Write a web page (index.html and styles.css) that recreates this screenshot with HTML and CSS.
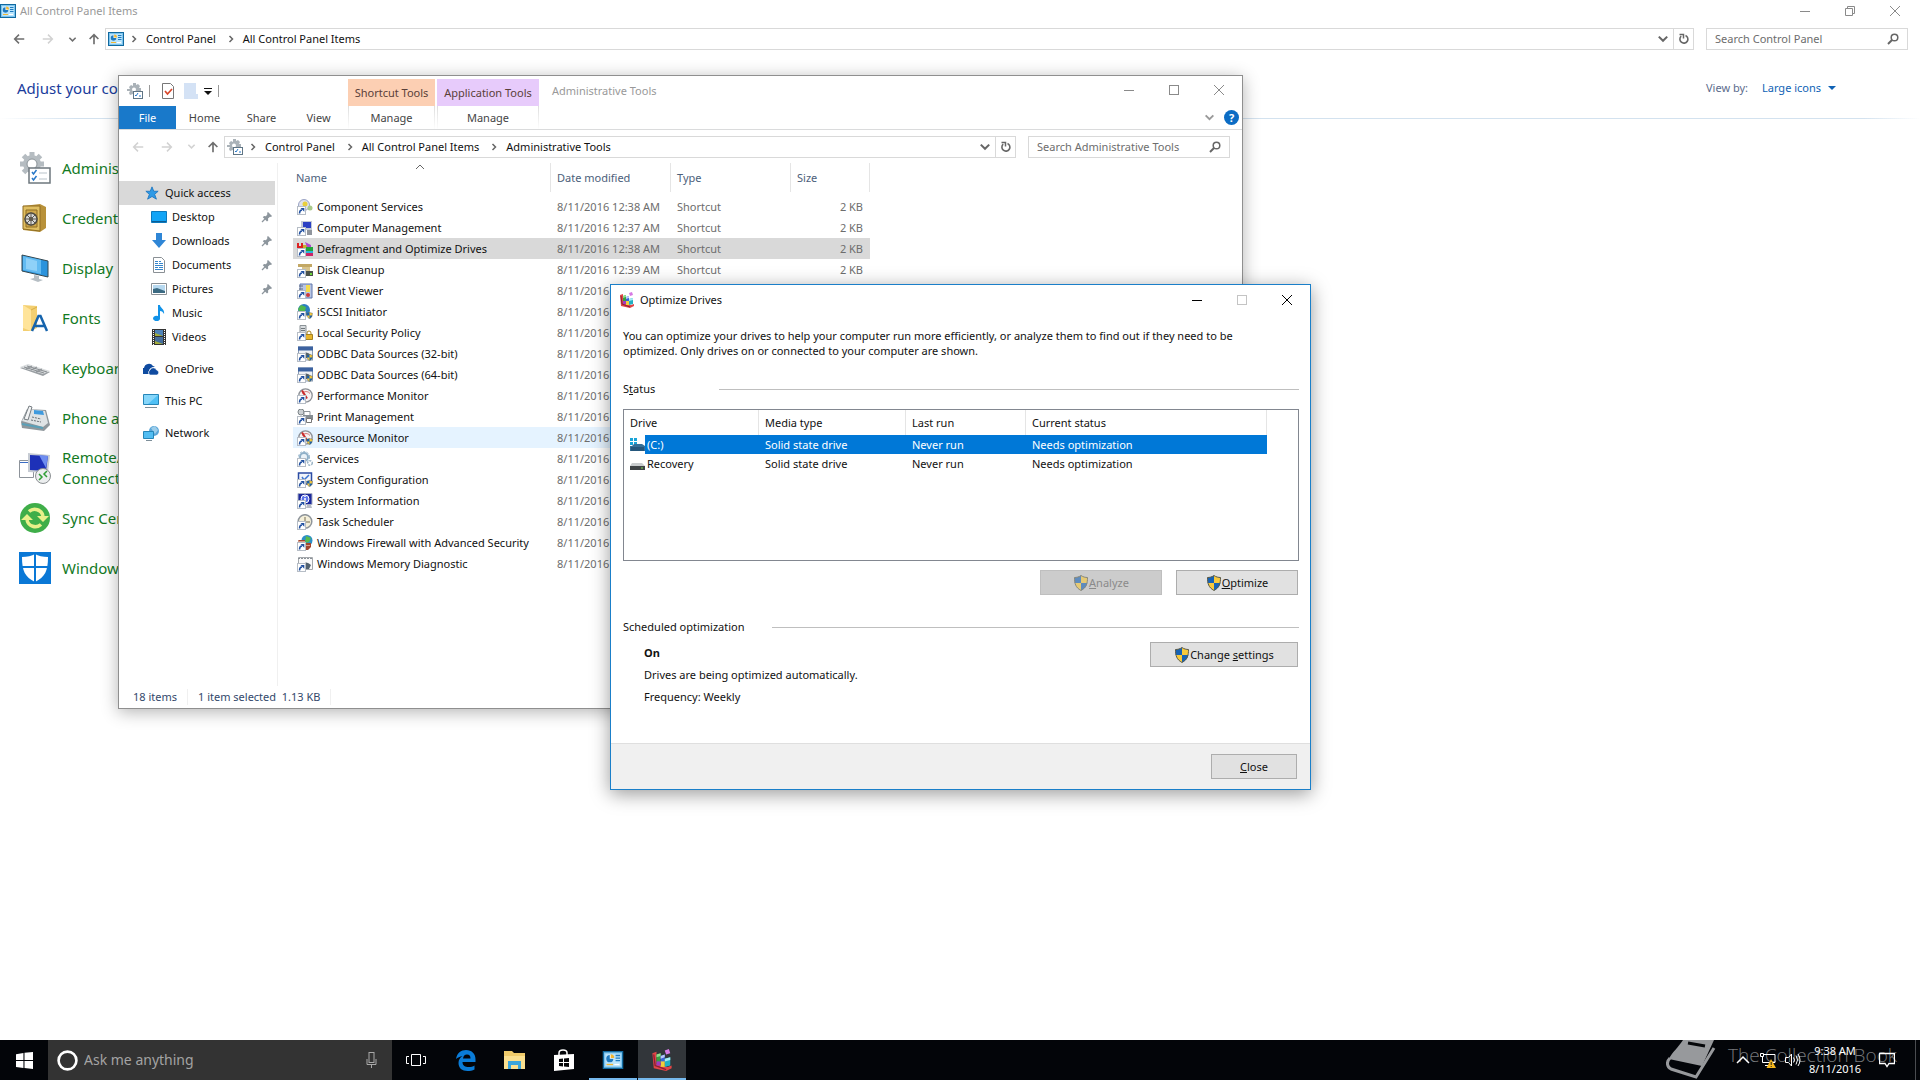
FILE: index.html
```
<!DOCTYPE html>
<html lang="en">
<head>
    <meta charset="UTF-8">
    <meta name="viewport" content="width=device-width, initial-scale=1.0">
    <title>All Control Panel Items</title>
    <link rel="stylesheet" href="styles.css">
</head>
<body>
    <!-- shared icons -->
    <svg class="sprite" aria-hidden="true">
        <symbol id="i-cp" viewBox="0 0 16 14">
            <rect x=".5" y=".5" width="15" height="13" fill="#7cc4ef" stroke="#11699f"/>
            <rect x="2" y="2" width="12" height="10" fill="#b9e4fb"/>
            <circle cx="5.500" cy="6" r="2.800" fill="#fff"/>
            <path d="M5.500 3.200A2.800 2.800 0 1 0 8.300 6H5.500z" fill="#1e7ac0"/>
            <path d="M6.200 2.600V5.400H9A2.800 2.800 0 0 0 6.200 2.600z" fill="#f2b632"/>
            <path d="M10 3.500h3.500M10 5.500h3.500M10 7.500h3.500" stroke="#1e7ac0"/>
            <path d="M3 10.500h5" stroke="#f2b632"/><path d="M9 10.500h4" stroke="#fff"/>
        </symbol>
        <symbol id="i-admin" viewBox="0 0 32 32">
            <g fill="#b5bcc1">
                <circle cx="13" cy="12" r="9"/>
                <path d="M10.500 0h5v24h-5zM1 9.500h24v5H1z"/>
                <path d="M10.500 0h5v24h-5zM1 9.500h24v5H1z" transform="rotate(45 13 12)"/>
            </g>
            <circle cx="13" cy="12" r="5" fill="#fff" stroke="#8c9499"/>
            <rect x="10" y="16" width="21" height="15" fill="#fff" stroke="#6d777d" stroke-width="1.500"/>
            <path d="M13 20l1.500 2 3-4M13 26l1.500 2 3-4" fill="none" stroke="#2878c8" stroke-width="1.500"/>
            <path d="M20 21h8M20 27h8" stroke="#b9c3ca"/>
        </symbol>
        <symbol id="i-back" viewBox="0 0 16 16"><path d="M14 8H3M8 3L3 8l5 5" fill="none" stroke="currentColor" stroke-width="1.700"/></symbol>
        <symbol id="i-fwd" viewBox="0 0 16 16"><path d="M2 8h11M8 3l5 5-5 5" fill="none" stroke="currentColor" stroke-width="1.700"/></symbol>
        <symbol id="i-up" viewBox="0 0 16 16"><path d="M8 14V3M3 8l5-5 5 5" fill="none" stroke="currentColor" stroke-width="1.900"/></symbol>
        <symbol id="i-down" viewBox="0 0 10 10"><path d="M1.500 3L5 6.500 8.500 3" fill="none" stroke="currentColor" stroke-width="1.700"/></symbol>
        <symbol id="i-next" viewBox="0 0 10 10"><path d="M3.500 2L6.500 5l-3 3" fill="none" stroke="currentColor" stroke-width="1.500"/></symbol>
        <symbol id="i-refresh" viewBox="0 0 12 12"><path d="M3.200 3.200A4 4 0 1 0 7.500 2.500" fill="none" stroke="currentColor" stroke-width="1.600"/><path d="M1.500 1.500H5.500V5.500" fill="none" stroke="currentColor" stroke-width="1.500"/></symbol>
        <symbol id="i-find" viewBox="0 0 12 12"><circle cx="7.500" cy="4.500" r="3.300" fill="none" stroke="currentColor" stroke-width="1.500"/><path d="M5 7L1 11" stroke="currentColor" stroke-width="1.900"/></symbol>
        <symbol id="i-min" viewBox="0 0 12 12"><path d="M1 6.500h10" stroke="currentColor"/></symbol>
        <symbol id="i-max" viewBox="0 0 12 12"><rect x="1.500" y="1.500" width="9" height="9" fill="none" stroke="currentColor"/></symbol>
        <symbol id="i-restore" viewBox="0 0 12 12"><path d="M1.500 3.500h7v7h-7zM3.500 3.500v-2h7v7h-2" fill="none" stroke="currentColor"/></symbol>
        <symbol id="i-close" viewBox="0 0 12 12"><path d="M1 1l10 10M11 1L1 11" stroke="currentColor"/></symbol>
        <symbol id="i-pin" viewBox="0 0 12 12"><path d="M7 1l4 4-1 1-1-.3L7 7.500l.2 2L6 10.500 1.800 6.300 3 5l2 .2L6.500 3 6 2z" fill="#8d969d"/><path d="M4 8L1 11" stroke="#8d969d" stroke-width="1.300"/></symbol>
        <symbol id="i-shield" viewBox="0 0 16 16">
            <path d="M8 .5C6 2 3.500 2.500 1.500 2.500c0 6 1 10 6.500 13 5.500-3 6.500-7 6.500-13C12.500 2.500 10 2 8 .5z" fill="#f8ca3c"/>
            <path d="M8 .5V8H1.700C1.500 6.500 1.500 4.500 1.500 2.500 3.500 2.500 6 2 8 .5zM8 8h6.300C13.800 11 12 13.500 8 15.500z" fill="#1763b5"/>
            <path d="M8 .5C6 2 3.500 2.500 1.500 2.500c0 6 1 10 6.500 13 5.500-3 6.500-7 6.500-13C12.500 2.500 10 2 8 .5z" fill="none" stroke="#5a5a4a"/>
        </symbol>
        <symbol id="i-link" viewBox="0 0 16 16">
            <rect x=".5" y="7.500" width="8" height="8" fill="#fff" stroke="#b6bdc6"/>
            <path d="M2.500 14.500c0-2.500 1-3.500 2.500-3.500" fill="none" stroke="#1f4fa0" stroke-width="1.500"/><path d="M3.500 9h3.800v3.800z" fill="#1f4fa0"/>
        </symbol>
        <symbol id="i-defrag" viewBox="0 0 16 16">
            <path d="M1 3l3-1v9l8 2 3-1v2l-4 2-9-2z" fill="#e04646"/>
            <path d="M2 4l1 8 8 3" fill="none" stroke="#8e1f35"/>
            <path d="M4 4l3-1v7H4z" fill="#36a043"/><path d="M4 4l3-1v2l-3 1z" fill="#8fe08c"/>
            <path d="M7 5l3-1v6H7z" fill="#3a62d8"/><path d="M7 5l3-1v2L7 7z" fill="#b8c8fa"/>
            <path d="M10 7l4-1v6l-4 1z" fill="#22b0c4"/><path d="M10 7l4-1v2l-4 1z" fill="#a6ecf2"/>
            <path d="M7 9h3v4H7z" fill="#f0cf3b"/><path d="M4 9h3v3H4z" fill="#a03ac0"/>
            <path d="M10 1l3-1 1 3-3 1z" fill="#d67ae4"/>
        </symbol>
        <symbol id="i-gauge" viewBox="0 0 16 16"><circle cx="8.500" cy="7.500" r="6.700" fill="#f6f3f3" stroke="#8b8f95" stroke-width="1.300"/><path d="M5 5.500a5 5 0 0 1 8 0" fill="none" stroke="#d67a7a"/><path d="M5 2.500l5 8" stroke="#c92a2a" stroke-width="2"/></symbol>
        <symbol id="i-odbc" viewBox="0 0 16 16"><rect x="1.500" y="1" width="14" height="13" fill="#eef1f5" stroke="#8a9bb5"/><path d="M1 .5h15v4H1z" fill="#3c62a0"/><path d="M5 9q4-5 9 0l-2 3H7z" fill="#56636e"/></symbol>
        <symbol id="i-miniadmin" viewBox="0 0 16 16"><path d="M6 0h3v2l2-1 2 2-1 2h2v3h-4v7H6v-4l-3 1-1-2 1-2H0V6h3L2 4l2-2 2 1z" fill="#aab2b8"/><circle cx="7" cy="6.500" r="2" fill="#fff"/><rect x="6.500" y="8.500" width="9" height="7" fill="#fff" stroke="#5f7585"/><path d="M8 12l1 1 2-3M12 13h2" fill="none" stroke="#2878c8"/></symbol>
    </svg>

    <main class="desktop">
        <section class="cpanel">
            <header class="titlebar">
                <svg class="icon"><use href="#i-cp"/></svg>
                <h1 class="caption">All Control Panel Items</h1>
                <div class="controls">
                    <button aria-label="Minimize"><svg><use href="#i-min"/></svg></button>
                    <button aria-label="Restore"><svg><use href="#i-restore"/></svg></button>
                    <button aria-label="Close"><svg><use href="#i-close"/></svg></button>
                </div>
            </header>
            <nav class="navbar">
                <div class="arrows">
                    <button aria-label="Back"><svg><use href="#i-back"/></svg></button>
                    <button class="off" aria-label="Forward"><svg><use href="#i-fwd"/></svg></button>
                    <button class="small" aria-label="Recent"><svg><use href="#i-down"/></svg></button>
                    <button class="up" aria-label="Up"><svg><use href="#i-up"/></svg></button>
                </div>
                <div class="address">
                    <svg class="icon"><use href="#i-cp"/></svg>
                    <svg class="sep"><use href="#i-next"/></svg><a href="#">Control Panel</a>
                    <svg class="sep"><use href="#i-next"/></svg><a href="#">All Control Panel Items</a>
                    <button class="drop" aria-label="Previous locations"><svg><use href="#i-down"/></svg></button>
                    <button class="refresh" aria-label="Refresh"><svg><use href="#i-refresh"/></svg></button>
                </div>
                <div class="search">
                    <input type="text" placeholder="Search Control Panel" aria-label="Search Control Panel">
                    <svg><use href="#i-find"/></svg>
                </div>
            </nav>
            <div class="cp-head">
                <h2>Adjust your computer's settings</h2>
                <label for="viewby">View by:</label>
                <span class="viewby">
                    <select id="viewby"><option>Large icons</option></select>
                    <svg viewBox="0 0 8 5"><path d="M0 0h8L4 4z" fill="#0f62b5"/></svg>
                </span>
            </div>
            <ul class="cp-items">
                <li><svg viewBox="0 0 32 32"><use href="#i-admin"/></svg><a href="#">Administrative Tools</a></li>
                <li><svg viewBox="0 0 32 32"><path d="M4 4l17-2 6 3v21l-6 4-17-2z" fill="#b8913a"/><path d="M4 4h17v25l-17-2z" fill="#e0bf62" stroke="#8f6d22"/><path d="M7 8h11v17H7z" fill="#cfa84b" stroke="#8f6d22"/><circle cx="12" cy="17" r="6" fill="#d7d9da" stroke="#4e4a40" stroke-width="1.500"/><circle cx="12" cy="17" r="2" fill="#4e4a40"/><path d="M12 10v14M5 17h14M7 12l10 10M17 12L7 22" stroke="#5e594c"/></svg><a href="#">Credential Manager</a></li>
                <li><svg viewBox="0 0 32 32"><path d="M3 3l26 6v16L3 19z" fill="#2b93dc" stroke="#35474f"/><path d="M4 4l18 4v14L4 18z" fill="#62bbf2"/><path d="M7 6l11 3v10L7 17z" fill="#8fd1f8"/><path d="M15 23l5 1v3l4 1-5 2-8-3 4-1z" fill="#b6bec4"/></svg><a href="#">Display</a></li>
                <li><svg viewBox="0 0 32 32"><path d="M4 3l14 1v22l-6 3H4z" fill="#f3cf71"/><path d="M4 3l8 5v21l-8-3z" fill="#ffe49a"/><path d="M12 8l6-3" stroke="#d9ae48"/><path d="M13 29l6.500-15h2L28 29M16 24h9" fill="none" stroke="#1664ad" stroke-width="2.500"/></svg><a href="#">Fonts</a></li>
                <li><svg viewBox="0 0 32 32"><path d="M1 16l8-3 22 7-7 4z" fill="#9a9fa3"/><path d="M1 15l8-3 22 7-7 3z" fill="#d9dcde"/><path d="M5 15l20 6M8 14l20 6M7 17l6-3M12 18l6-3M17 20l6-3" stroke="#888d91"/></svg><a href="#">Keyboard</a></li>
                <li><svg viewBox="0 0 32 32"><path d="M2 20l6-13 19 1 4 15-6 6-22-3z" fill="#8f979c"/><path d="M3 19l6-12 17 2 3 12-5 4z" fill="#dfe3e5"/><path d="M15 8l9 1 1 4-10-1z" fill="#3f9ade"/><path d="M5 17l5-13 3 1-4 13z" fill="#f3f4f5" stroke="#767d82"/><path d="M13 15l9 2M12 18l10 2" stroke="#6a7278" stroke-dasharray="2 1"/><path d="M3 22l21 4" stroke="#5aa0b8" stroke-width="2"/></svg><a href="#">Phone and Modem</a></li>
                <li><svg viewBox="0 0 32 32"><path d="M.5 8.500h14v17H.5z" fill="#fff" stroke="#8d939a"/><path d="M1 10.500h8" stroke="#3a6cc4"/><path d="M9 1l22 2-2 18-20-1z" fill="#c6cbd3"/><path d="M11 3l18 1-2 15-16-1z" fill="#1d31b8"/><path d="M20 3l9 1-2 12z" fill="#6d8cf0"/><circle cx="24" cy="24" r="7.500" fill="#eceeef" stroke="#8b8f92"/><path d="M20 22l3 3-3 3M28 19l-3 3 3 3" fill="none" stroke="#2f9e36" stroke-width="1.500"/></svg><a href="#">RemoteApp and Desktop Connections</a></li>
                <li><svg viewBox="0 0 32 32"><circle cx="16" cy="16" r="15" fill="#3fae49"/><path d="M10 9.500A8.500 8.500 0 0 1 24 14M22 22.500A8.500 8.500 0 0 1 8 18" fill="none" stroke="#e9f08a" stroke-width="3.500"/><path d="M18 14h12l-6 6zM14 18H2l6-6z" fill="#e9f08a"/></svg><a href="#">Sync Center</a></li>
                <li><svg viewBox="0 0 32 32"><path d="M0 0h32v32H0z" fill="#0a78d6"/><path d="M16 2c-3 2-8 3-13 3 0 14 3 20 13 25 10-5 13-11 13-25-5 0-10-1-13-3z" fill="#fff"/><path d="M16 2v28M3 15h26" stroke="#0a78d6" stroke-width="2"/></svg><a href="#">Windows Defender</a></li>
            </ul>
        </section>

        <section class="window explorer">
            <header class="ribbon-top">
                <div class="quick">
                    <svg class="icon"><use href="#i-miniadmin"/></svg>
                    <span class="bar"></span>
                    <svg class="icon" viewBox="0 0 16 16"><path d="M2.500.5h8l3 3v12h-11z" fill="#fff" stroke="#777"/><path d="M5 8l2.500 3L12 6" fill="none" stroke="#d8472b" stroke-width="1.700"/></svg>
                    <svg class="icon" viewBox="0 0 16 16"><path d="M2 0h12v11h2v5H2z" fill="#d4e2f5"/></svg>
                    <svg class="caret" viewBox="0 0 8 8"><path d="M0 1.500h8" stroke="#111"/><path d="M0 4h8L4 8z" fill="#111"/></svg>
                    <span class="bar"></span>
                </div>
                <span class="context shortcut">Shortcut Tools</span>
                <span class="context app">Application Tools</span>
                <h2 class="caption">Administrative Tools</h2>
                <div class="controls">
                    <button aria-label="Minimize"><svg><use href="#i-min"/></svg></button>
                    <button aria-label="Maximize"><svg><use href="#i-max"/></svg></button>
                    <button aria-label="Close"><svg><use href="#i-close"/></svg></button>
                </div>
            </header>
            <div class="tabs">
                <button class="file">File</button>
                <button>Home</button>
                <button>Share</button>
                <button>View</button>
                <button class="manage">Manage</button>
                <button class="manage wide">Manage</button>
                <svg class="expand"><use href="#i-down"/></svg>
                <button class="help" aria-label="Help">?</button>
            </div>
            <nav class="navbar">
                <div class="arrows">
                    <button class="off" aria-label="Back"><svg><use href="#i-back"/></svg></button>
                    <button class="off" aria-label="Forward"><svg><use href="#i-fwd"/></svg></button>
                    <button class="small off" aria-label="Recent"><svg><use href="#i-down"/></svg></button>
                    <button class="up" aria-label="Up"><svg><use href="#i-up"/></svg></button>
                </div>
                <div class="address">
                    <svg class="icon"><use href="#i-miniadmin"/></svg>
                    <svg class="sep"><use href="#i-next"/></svg><a href="#">Control Panel</a>
                    <svg class="sep"><use href="#i-next"/></svg><a href="#">All Control Panel Items</a>
                    <svg class="sep"><use href="#i-next"/></svg><a href="#">Administrative Tools</a>
                    <button class="drop" aria-label="Previous locations"><svg><use href="#i-down"/></svg></button>
                    <button class="refresh" aria-label="Refresh"><svg><use href="#i-refresh"/></svg></button>
                </div>
                <div class="search">
                    <input type="text" placeholder="Search Administrative Tools" aria-label="Search Administrative Tools">
                    <svg><use href="#i-find"/></svg>
                </div>
            </nav>
            <div class="panes">
                <aside class="tree">
                    <a href="#" class="top current"><svg viewBox="0 0 16 16"><path d="M8 1l2 5h5l-4 3.500 2 5.500-5-3-5 3 2-5.500L1 6h5z" fill="#2f9ae6" stroke="#1c76c0"/></svg>Quick access</a>
                    <a href="#"><svg viewBox="0 0 16 16"><path d="M.5 2.500h15v11H.5z" fill="#12a4f6" stroke="#0d79bd"/><path d="M1 12.500h14" stroke="#0b5c94"/></svg>Desktop<svg class="pin"><use href="#i-pin"/></svg></a>
                    <a href="#"><svg viewBox="0 0 16 16"><path d="M5 0h6v7h4l-7 8-7-8h4z" fill="#2f86d6"/></svg>Downloads<svg class="pin"><use href="#i-pin"/></svg></a>
                    <a href="#"><svg viewBox="0 0 16 16"><path d="M2.500.5h8l3 3v12h-11z" fill="#fff" stroke="#8a9095"/><path d="M4 4.500h3M4 6.500h3M4 8.500h8M4 10.500h3M8 10.500h4M4 12.500h8M8 4.500h2M8 6.500h4" stroke="#3585cb"/></svg>Documents<svg class="pin"><use href="#i-pin"/></svg></a>
                    <a href="#"><svg viewBox="0 0 16 16"><path d="M.5 2.500h15v11H.5z" fill="#fff" stroke="#8a9095"/><path d="M2 4h12v8H2z" fill="#b7d9f0"/><path d="M2 8l4-1 8 3v2H2z" fill="#3b6a82"/></svg>Pictures<svg class="pin"><use href="#i-pin"/></svg></a>
                    <a href="#"><svg viewBox="0 0 16 16"><path d="M7 0h2c0 3 5 4 4 9-1-2-2-3-4-3v7a3.500 2.700 0 1 1-2-2z" fill="#1192e8"/></svg>Music</a>
                    <a href="#"><svg viewBox="0 0 16 16"><path d="M1 0h14v16H1z" fill="#343434"/><path d="M4 1h8v6H4z" fill="#4f83b8"/><path d="M4 8h8v7H4z" fill="#456d9c"/><path d="M4 4l8 3H4zM4 12l8 3H4z" fill="#a4ad3a"/><path d="M2.500 1v15M13.500 1v15" stroke="#fff" stroke-dasharray="1 1"/></svg>Videos</a>
                    <a href="#" class="top"><svg viewBox="0 0 16 16"><path d="M1 13a3 3 0 0 1 0-6 5 5 0 0 1 9-2 4 4 0 0 1 2 .500C8 6 6 8 6 10c-1 1-1 2 0 3z" fill="#0f4ba0"/><path d="M7 14a3 3 0 0 1 0-5 3.500 3.500 0 0 1 6.500 0A2.600 2.600 0 0 1 14 14z" fill="#0f4ba0" stroke="#fff" stroke-width=".6"/></svg>OneDrive</a>
                    <a href="#" class="top"><svg viewBox="0 0 16 16"><path d="M.5 1.500h15v10H.5z" fill="#4fc0f5" stroke="#2686b8"/><path d="M1 2h14L5 11H1z" fill="#86d6fa"/><path d="M2 14.500h12" stroke="#7d8e99"/></svg>This PC</a>
                    <a href="#" class="top"><svg viewBox="0 0 16 16"><circle cx="11" cy="6" r="5" fill="#5aa6d8"/><path d="M8 3l4-2 3 4-3 4z" fill="#9ccdea"/><path d="M.5 6.500h10v7H.5z" fill="#52bdf2" stroke="#2686b8"/><path d="M3 15.500h6" stroke="#7d8e99"/></svg>Network</a>
                </aside>
                <div class="files">
                    <table>
                        <colgroup><col class="c-name"><col class="c-date"><col class="c-type"><col class="c-size"></colgroup>
                        <thead>
                            <tr>
                                <th><span>Name</span><svg class="sort" viewBox="0 0 10 6"><path d="M1 5l4-4 4 4" fill="none" stroke="#666"/></svg></th>
                                <th><span>Date modified</span></th>
                                <th><span>Type</span></th>
                                <th><span>Size</span></th>
                            </tr>
                        </thead>
                        <tbody>
                            <tr><td><svg viewBox="0 0 16 16"><circle cx="7" cy="6" r="5.500" fill="#dfe2ec" stroke="#9aa3c4"/><circle cx="8" cy="5" r="2.500" fill="#e8cf3c"/><circle cx="13" cy="9" r="2.500" fill="#a9c98a"/><use href="#i-link"/></svg>Component Services</td><td>8/11/2016 12:38 AM</td><td>Shortcut</td><td>2 KB</td></tr>
                            <tr><td><svg viewBox="0 0 16 16"><path d="M4 1h11v9H4z" fill="#c3c9d6"/><path d="M6 2h8v6H6z" fill="#2b40c4"/><path d="M10 10h5v5h-5z" fill="#8f949c"/><use href="#i-link"/></svg>Computer Management</td><td>8/11/2016 12:37 AM</td><td>Shortcut</td><td>2 KB</td></tr>
                            <tr class="selected"><td><svg viewBox="0 0 16 16"><path d="M0 2h2v3h2V2h2v5H0z" fill="#d22"/><path d="M6 4h4v4H6z" fill="#c8b22c"/><path d="M8 1l6 3v2h-4z" fill="#b04ad0"/><path d="M9 6h7v4H9z" fill="#20a53a"/><path d="M9 10h7v2H9z" fill="#2bb5d8"/><path d="M9 12h7v3H9z" fill="#cc2466"/><use href="#i-link"/></svg>Defragment and Optimize Drives</td><td>8/11/2016 12:38 AM</td><td>Shortcut</td><td>2 KB</td></tr>
                            <tr><td><svg viewBox="0 0 16 16"><path d="M1 2h14v3H1z" fill="#c3a865"/><path d="M5 5h8v4H5z" fill="#d8c48c"/><path d="M8 9h8v5H8z" fill="#4a5148"/><path d="M13 11h2v2h-2z" fill="#6cd83c"/><use href="#i-link"/></svg>Disk Cleanup</td><td>8/11/2016 12:39 AM</td><td>Shortcut</td><td>2 KB</td></tr>
                            <tr><td><svg viewBox="0 0 16 16"><path d="M3 1h12v14H3z" fill="#b9c6e4" stroke="#5f76ac"/><path d="M2 3h4M2 6h4" stroke="#5f6a80"/><path d="M9 2h4v7H9z" fill="#f4dc4c"/><circle cx="11" cy="12" r="2" fill="#cf3a3a"/><use href="#i-link"/></svg>Event Viewer</td><td>8/11/2016 12:37 AM</td><td>Shortcut</td><td>2 KB</td></tr>
                            <tr><td><svg viewBox="0 0 16 16"><circle cx="7" cy="6" r="6" fill="#2c7fc0"/><path d="M4 1l5 2-1 4-5 2-2-4z" fill="#4fb84e"/><use href="#i-link"/><use href="#i-shield" x="9" y="8" width="7" height="7"/></svg>iSCSI Initiator</td><td>8/11/2016 12:37 AM</td><td>Shortcut</td><td>2 KB</td></tr>
                            <tr><td><svg viewBox="0 0 16 16"><path d="M3 .5h6v10H3z" fill="#d9dde0" stroke="#8b9297"/><path d="M4 3.500h4M4 5.500h4" stroke="#6f777c"/><path d="M10 10V8a2 2 0 0 1 4 0v2" fill="none" stroke="#a58322"/><path d="M8.500 9.500h7v5h-7z" fill="#e7b52c" stroke="#a58322"/><use href="#i-link"/></svg>Local Security Policy</td><td>8/11/2016 12:38 AM</td><td>Shortcut</td><td>2 KB</td></tr>
                            <tr><td><svg viewBox="0 0 16 16"><use href="#i-odbc"/><use href="#i-link"/><use href="#i-shield" x="9" y="8" width="7" height="7"/></svg>ODBC Data Sources (32-bit)</td><td>8/11/2016 12:37 AM</td><td>Shortcut</td><td>2 KB</td></tr>
                            <tr><td><svg viewBox="0 0 16 16"><use href="#i-odbc"/><use href="#i-link"/><use href="#i-shield" x="9" y="8" width="7" height="7"/></svg>ODBC Data Sources (64-bit)</td><td>8/11/2016 12:38 AM</td><td>Shortcut</td><td>2 KB</td></tr>
                            <tr><td><svg viewBox="0 0 16 16"><use href="#i-gauge"/><use href="#i-link"/></svg>Performance Monitor</td><td>8/11/2016 12:37 AM</td><td>Shortcut</td><td>2 KB</td></tr>
                            <tr><td><svg viewBox="0 0 16 16"><circle cx="4" cy="3" r="3" fill="#ccd1d4" stroke="#7d8488"/><path d="M7 2.500h6v4H7z" fill="#fff" stroke="#8b9297"/><path d="M6 6h10v5H6z" fill="#858c91"/><path d="M9.500 9.500h5v4h-5z" fill="#fff" stroke="#777"/><use href="#i-link"/></svg>Print Management</td><td>8/11/2016 12:38 AM</td><td>Shortcut</td><td>2 KB</td></tr>
                            <tr class="hover"><td><svg viewBox="0 0 16 16"><use href="#i-gauge"/><use href="#i-link"/><use href="#i-shield" x="9" y="8" width="7" height="7"/></svg>Resource Monitor</td><td>8/11/2016 12:37 AM</td><td>Shortcut</td><td>2 KB</td></tr>
                            <tr><td><svg viewBox="0 0 16 16"><circle cx="7" cy="6" r="4" fill="#eaf2f8" stroke="#8fb0c8" stroke-width="2"/><circle cx="7" cy="6" r="5.500" fill="none" stroke="#8fb0c8" stroke-dasharray="2 1.500"/><circle cx="13" cy="12" r="2.300" fill="none" stroke="#9bb4c6" stroke-width="1.500" stroke-dasharray="2 1"/><use href="#i-link"/></svg>Services</td><td>8/11/2016 12:37 AM</td><td>Shortcut</td><td>2 KB</td></tr>
                            <tr><td><svg viewBox="0 0 16 16"><path d="M1.500 1h13v11h-13z" fill="#f2f5fa" stroke="#2b4ba4" stroke-width="1.500"/><path d="M5 5l2 3 5-5" fill="none" stroke="#3c74d2" stroke-width="1.500"/><use href="#i-link"/><use href="#i-shield" x="9" y="8" width="7" height="7"/></svg>System Configuration</td><td>8/11/2016 12:37 AM</td><td>Shortcut</td><td>2 KB</td></tr>
                            <tr><td><svg viewBox="0 0 16 16"><path d="M1 .5h14v11H1z" fill="#1d2a9c" stroke="#a9afc4"/><circle cx="8" cy="6" r="4" fill="#5d74ea" stroke="#fff"/><path d="M8 3v1M8 5v4" stroke="#fff" stroke-width="1.500"/><path d="M10 12h4l1 3h-6z" fill="#b7bcc6"/><use href="#i-link"/></svg>System Information</td><td>8/11/2016 12:37 AM</td><td>Shortcut</td><td>2 KB</td></tr>
                            <tr><td><svg viewBox="0 0 16 16"><circle cx="8" cy="7.500" r="6.800" fill="#f4efd9" stroke="#8f959b" stroke-width="1.500"/><path d="M8 3v5h5" fill="none" stroke="#756d52"/><use href="#i-link"/></svg>Task Scheduler</td><td>8/11/2016 12:38 AM</td><td>Shortcut</td><td>2 KB</td></tr>
                            <tr><td><svg viewBox="0 0 16 16"><circle cx="10" cy="5.500" r="5.500" fill="#2c8fc8"/><path d="M9 1l5 2-2 4-4 1z" fill="#57bb4c"/><path d="M1 5h7v3h6v4l-3 3H8z" fill="#a2452f"/><path d="M1 6.500h7M9 10.500h4" stroke="#d99a86"/><use href="#i-link"/></svg>Windows Firewall with Advanced Security</td><td>8/11/2016 12:38 AM</td><td>Shortcut</td><td>2 KB</td></tr>
                            <tr><td><svg viewBox="0 0 16 16"><path d="M1.500 1.500h14v12h-14z" fill="#fafafa" stroke="#a5a9ad"/><path d="M1 2.500h15" stroke="#8b9197" stroke-dasharray="2 1"/><path d="M5 9q4-5 9 0l-2 4H7z" fill="#52626f"/><use href="#i-link"/></svg>Windows Memory Diagnostic</td><td>8/11/2016 12:37 AM</td><td>Shortcut</td><td>2 KB</td></tr>
                        </tbody>
                    </table>
                </div>
            </div>
            <footer class="statusbar">
                <span>18 items</span>
                <span>1 item selected&nbsp; 1.13 KB</span>
            </footer>
        </section>

        <section class="window dialog" role="dialog" aria-labelledby="dlg-title">
            <header class="titlebar">
                <svg class="icon"><use href="#i-defrag"/></svg>
                <h2 class="caption" id="dlg-title">Optimize Drives</h2>
                <div class="controls">
                    <button aria-label="Minimize"><svg><use href="#i-min"/></svg></button>
                    <button aria-label="Maximize" disabled><svg><use href="#i-max"/></svg></button>
                    <button aria-label="Close"><svg><use href="#i-close"/></svg></button>
                </div>
            </header>
            <div class="dlg-body">
                <p class="intro">You can optimize your drives to help your computer run more efficiently, or analyze them to find out if they need to be optimized. Only drives on or connected to your computer are shown.</p>
                <h3 class="group status"><span>S<u>t</u>atus</span></h3>
                <div class="drives">
                    <table>
                        <colgroup><col class="d-drive"><col class="d-media"><col class="d-last"><col class="d-status"></colgroup>
                        <thead>
                            <tr><th>Drive</th><th>Media type</th><th>Last run</th><th>Current status</th></tr>
                        </thead>
                        <tbody>
                            <tr class="selected">
                                <td><div class="drive"><svg viewBox="0 0 16 16"><path d="M1 1h3v3H1zM5 1h3v3H5zM1 5h3v3H1zM5 5h3v3H5z" fill="#19a4d8"/><path d="M3 9l2-2h8l3 2v5H1v-5z" fill="#356f97"/><path d="M2 10h13v4H2z" fill="#26577c"/></svg><span>(C:)</span></div></td>
                                <td>Solid state drive</td><td>Never run</td><td>Needs optimization</td>
                            </tr>
                            <tr>
                                <td><div class="drive"><svg viewBox="0 0 16 16"><path d="M3 7h10l3 3H1z" fill="#c9ccce"/><path d="M1 10h15v4H1z" fill="#3f4346"/><path d="M12 12h2" stroke="#7ddc4c"/></svg><span>Recovery</span></div></td>
                                <td>Solid state drive</td><td>Never run</td><td>Needs optimization</td>
                            </tr>
                        </tbody>
                    </table>
                </div>
                <div class="actions">
                    <button class="btn" disabled><svg><use href="#i-shield"/></svg><span><u>A</u>nalyze</span></button>
                    <button class="btn"><svg><use href="#i-shield"/></svg><span><u>O</u>ptimize</span></button>
                </div>
                <h3 class="group sched"><span>Scheduled optimization</span></h3>
                <div class="schedule">
                    <div>
                        <p><b>On</b></p>
                        <p>Drives are being optimized automatically.</p>
                        <p>Frequency: Weekly</p>
                    </div>
                    <button class="btn change"><svg><use href="#i-shield"/></svg><span>Change <u>s</u>ettings</span></button>
                </div>
            </div>
            <footer class="dlg-foot">
                <button class="btn close"><span><u>C</u>lose</span></button>
            </footer>
        </section>
    </main>

    <footer class="taskbar">
        <button class="start" aria-label="Start"><svg viewBox="0 0 16 16"><path d="M0 2l7-1v6.500H0zM8 .8L16 0v7.500H8zM0 8.500h7V15l-7-1zM8 8.500h8V16l-8-1z" fill="#fff"/></svg></button>
        <div class="cortana">
            <svg viewBox="0 0 20 20"><circle cx="10" cy="10" r="8.500" fill="none" stroke="#fff" stroke-width="2.500"/></svg>
            <input type="text" placeholder="Ask me anything" aria-label="Ask me anything">
            <svg class="mic" viewBox="0 0 12 18"><rect x="3.500" y="1.500" width="5" height="10" fill="none" stroke="#a8a8a8"/><path d="M1.500 8v5.500h9V8M6 14v3" fill="none" stroke="#a8a8a8"/></svg>
        </div>
        <button class="task" aria-label="Task View"><svg viewBox="0 0 24 24"><path d="M7.500 6.500h9v11h-9zM5 8.500H2.500v7H5M19 8.500h2.500v7H19" fill="none" stroke="#fff"/></svg></button>
        <button class="task" aria-label="Edge"><svg viewBox="0 0 24 24"><path d="M2 11C3 5 7 2 12 2c6 0 9.500 4 9.500 9v3H8.500c0 4 3 5 6 5 2.500 0 4.500-.5 6-1.500v4c-2 1-4.500 1.500-7 1.500-5.500 0-9-3-9-8 0-3 1.500-5.500 4-7-2.500.5-5 1.500-6.500 3zm7 -.5h7.500C16.500 8 15.500 6.500 13 6.500S9.500 8 9 10.500z" fill="#0a7cd8"/></svg></button>
        <button class="task" aria-label="File Explorer"><svg viewBox="0 0 24 24"><path d="M1 3h8l2 2h11v16H1z" fill="#f0cb6a"/><path d="M1 8h21v13H1z" fill="#fbe08f"/><path d="M5 21v-8h13v8h-3v-4H8v4z" fill="#3aa5dc"/></svg></button>
        <button class="task" aria-label="Store"><svg viewBox="0 0 24 24"><path d="M2 7l20-1v15L2 23z" fill="#fff"/><path d="M7 8V5c0-4 8-4 8 0v2" fill="none" stroke="#fff" stroke-width="1.500"/><path d="M7 11l4-.5V14H7zM12 10.500l5-.5v4h-5zM7 15h4v3.500L7 18zM12 15h5v4l-5-.5z" fill="#05070a"/></svg></button>
        <button class="task open" aria-label="All Control Panel Items"><svg viewBox="0 0 24 24"><use href="#i-cp" x="1" y="3" width="22" height="18"/></svg></button>
        <button class="task open active" aria-label="Optimize Drives"><svg viewBox="0 0 24 24"><use href="#i-defrag" x="1" y="1" width="22" height="22"/></svg></button>
        <div class="watermark">
            <svg viewBox="0 0 50 40"><path d="M17 0h31L36 26 3 19C6 12 12 8 17 0z" fill="#97999c"/><path d="M22 3l17 3" stroke="#05070a" stroke-width="3"/><path d="M4 18C0 22 1 27 5 29l25 8L48 8" fill="none" stroke="#97999c" stroke-width="3"/></svg>
            <span>The Collection Book</span>
        </div>
        <div class="tray">
            <button aria-label="Show hidden icons"><svg viewBox="0 0 16 16"><path d="M2 11l6-6 6 6" fill="none" stroke="#fff" stroke-width="1.500"/></svg></button>
            <button aria-label="Network"><svg viewBox="0 0 16 16"><path d="M.5 1.500h3v3h-3zM4 2.500h11v8H2.500V5M5 13.500h4" fill="none" stroke="#fff"/><path d="M11 7l5 9H6.500z" fill="#f6b81c"/><path d="M11.200 10v3M11.200 14v1" stroke="#222"/></svg></button>
            <button aria-label="Volume"><svg viewBox="0 0 16 16"><path d="M.5 5.500h3l3-3.500v12l-3-3.500h-3z" fill="none" stroke="#fff"/><path d="M8.500 5.500q2 2.500 0 5M11 3.500q3 4.500 0 9M13 2q4 6 0 12" fill="none" stroke="#fff"/></svg></button>
            <time class="clock"><span>9:38 AM</span><span>8/11/2016</span></time>
            <button class="action" aria-label="Action center"><svg viewBox="0 0 16 16"><path d="M.5 1.500h15v10H10l-2 3-2-3H.5z" fill="none" stroke="#fff" stroke-width="1.300"/></svg></button>
            <span class="peek"></span>
        </div>
    </footer>
</body>
</html>
```
FILE: styles.css
```
* {
    box-sizing: border-box;
}
body {
    margin: 0;
    height: 100vh;
    display: flex;
    flex-direction: column;
    overflow: hidden;
    background-color: #fff;
    color: #111;
    font-family: "Noto Sans", "Open Sans", sans-serif;
    font-size: 11px;
    line-height: 16px;
}
h1, h2, h3, p, ul {
    margin: 0;
    padding: 0;
    font-size: 11px;
    font-weight: normal;
}
button, input, select {
    margin: 0;
    padding: 0;
    border: none;
    background: none;
    color: inherit;
    font: inherit;
}
a {
    color: inherit;
    text-decoration: none;
}
svg {
    flex: none;
    display: block;
}
table {
    border-collapse: separate;
    border-spacing: 0;
    table-layout: fixed;
}
th, td {
    padding: 0;
    font-weight: normal;
    text-align: left;
    white-space: nowrap;
}
.sprite {
    position: absolute;
    width: 0;
    height: 0;
}
.icon {
    width: 16px;
    height: 16px;
}
.desktop {
    position: relative;
    flex: 1;
    min-height: 0;
}

/* title bars */
.titlebar {
    display: flex;
    align-items: center;
    gap: 4px;
    height: 22px;
}
.caption {
    flex: 1;
    color: #999;
}
.controls {
    display: flex;
    color: #8a8a8a;
}
.controls button {
    width: 45px;
    display: flex;
    justify-content: center;
}
.controls svg {
    width: 12px;
    height: 12px;
}

/* navigation row */
.navbar {
    display: flex;
    align-items: center;
    height: 34px;
}
.arrows {
    display: flex;
    align-items: center;
    color: #6e6e6e;
}
.arrows button {
    width: 29px;
    display: flex;
    justify-content: center;
}
.arrows svg {
    width: 14px;
    height: 14px;
}
.arrows .small {
    width: 20px;
}
.arrows .small svg {
    width: 9px;
    height: 9px;
}
.arrows .up {
    width: 23px;
}
.arrows .off {
    color: #d2d2d2;
}
.address {
    flex: 1;
    display: flex;
    align-items: center;
    height: 22px;
    padding-left: 2px;
    border: 1px solid #d9d9d9;
}
.address a {
    margin-right: 5px;
}
.address .sep {
    width: 10px;
    height: 10px;
    margin: 0 7px 0 5px;
    color: #666;
}
.address button {
    width: 20px;
    height: 20px;
    display: flex;
    align-items: center;
    justify-content: center;
    color: #666;
}
.address .drop {
    margin-left: auto;
}
.address .refresh {
    border-left: 1px solid #d9d9d9;
}
.address button svg {
    width: 12px;
    height: 12px;
}
.search {
    width: 202px;
    height: 22px;
    margin-left: 12px;
    padding: 0 8px;
    display: flex;
    align-items: center;
    border: 1px solid #d9d9d9;
}
.search input {
    flex: 1;
    min-width: 0;
    outline: none;
}
.search svg {
    width: 12px;
    height: 12px;
    color: #666;
}
.search input::placeholder {
    color: #6d6d6d;
    opacity: 1;
}

/* control panel */
.cpanel .navbar {
    padding: 0 12px 0 4px;
}
.cpanel .controls {
    margin-right: 3px;
}
.cp-head {
    display: flex;
    align-items: center;
    height: 63px;
    padding: 2px 84px 0 17px;
    border-bottom: 1px solid;
    border-image: linear-gradient(to right, #fff, #d3e2ef 4%, #d3e2ef 97%, #fff) 1;
}
.cp-head h2 {
    flex: 1;
    color: #1a3c9c;
    font-size: 15px;
}
.cp-head label {
    margin-right: 14px;
    color: #5b6b8c;
}
.viewby {
    position: relative;
    color: #0f62b5;
}
.viewby select {
    width: 74px;
    appearance: none;
    cursor: pointer;
}
.viewby svg {
    position: absolute;
    right: 0;
    top: 6px;
    width: 8px;
    height: 5px;
    pointer-events: none;
}
.cp-items {
    width: 270px;
    padding: 24px 0 0 19px;
    list-style: none;
}
.cp-items li {
    display: flex;
    align-items: center;
    gap: 11px;
    height: 50px;
    color: #137a1f;
    font-size: 15px;
    line-height: 21px;
}
.cp-items svg {
    width: 32px;
    height: 32px;
}

/* floating windows */
.window {
    position: absolute;
    display: flex;
    flex-direction: column;
    background-color: #fff;
}
.explorer {
    left: 118px;
    top: 75px;
    width: 1125px;
    height: 634px;
    border: 1px solid #8f8f8f;
    box-shadow: 0 3px 16px rgba(0, 0, 0, 0.3);
}
.ribbon-top {
    display: flex;
    align-items: flex-end;
    height: 30px;
}
.ribbon-top .caption {
    margin-left: 13px;
    line-height: 30px;
}
.ribbon-top .controls {
    margin-right: 1px;
    padding-bottom: 10px;
}
.quick {
    width: 229px;
    height: 30px;
    padding-left: 8px;
    display: flex;
    align-items: center;
    gap: 6px;
}
.quick .bar {
    width: 1px;
    height: 12px;
    margin-right: 4px;
    background-color: #999;
}
.quick .caret {
    width: 8px;
    height: 8px;
}
.context {
    height: 27px;
    line-height: 28px;
    margin-right: 2px;
    text-align: center;
    color: #5a4038;
}
.context.shortcut {
    width: 87px;
    background-color: #fccfb3;
}
.context.app {
    width: 102px;
    margin-right: 0;
    background-color: #e7cbfb;
}
.tabs {
    display: flex;
    align-items: center;
    height: 24px;
    border-bottom: 1px solid #dadbdc;
    color: #444;
}
.tabs button {
    width: 57px;
    height: 23px;
}
.tabs .file {
    background-color: #1979ca;
    color: #fff;
}
.tabs .manage {
    width: 87px;
    margin-left: 1px;
    margin-right: 1px;
    border: solid;
    border-width: 0 1px;
    border-image: linear-gradient(#dcdcdc, #fff) 1;
}
.tabs .wide {
    width: 102px;
}
.tabs .expand {
    width: 11px;
    height: 11px;
    margin-left: auto;
    margin-right: 9px;
    color: #999;
}
.tabs .help {
    width: 15px;
    height: 15px;
    margin-right: 3px;
    border-radius: 50%;
    background-color: #0c6cc4;
    color: #fff;
    font-weight: bold;
    line-height: 15px;
}
.explorer .navbar {
    height: 33px;
    padding: 0 12px 0 4px;
}
.panes {
    flex: 1;
    min-height: 0;
    display: flex;
}
.tree {
    width: 159px;
    padding: 18px 2px 0 0;
    border-right: 1px solid #f0f0f0;
}
.tree a {
    display: flex;
    align-items: center;
    gap: 5px;
    height: 24px;
    padding-left: 32px;
}
.tree svg {
    width: 16px;
    height: 16px;
}
.tree .top {
    gap: 6px;
    margin-top: 8px;
    padding-left: 24px;
}
.tree .current {
    margin-top: 0;
    background-color: #d9d9d9;
}
.tree .current svg {
    width: 14px;
    height: 14px;
    margin-left: 2px;
}
.tree .pin {
    width: 12px;
    height: 12px;
    margin-left: auto;
    margin-right: 2px;
}
.files {
    padding-left: 15px;
}
.files table {
    width: 577px;
}
.c-name {
    width: 258px;
}
.c-date, .c-type {
    width: 120px;
}
.c-size {
    width: 79px;
}
.files th {
    position: relative;
    height: 33px;
    vertical-align: top;
    color: #4c607a;
}
.files th span {
    display: block;
    height: 29px;
    padding-left: 6px;
    line-height: 29px;
    border-right: 1px solid #e5e5e5;
}
.files th:first-child span {
    padding-left: 3px;
}
.sort {
    position: absolute;
    left: 122px;
    top: 1px;
    width: 10px;
    height: 6px;
}
.files td {
    height: 21px;
    padding-left: 6px;
    color: #6d6d6d;
    line-height: 21px;
}
.files td:first-child {
    display: flex;
    align-items: center;
    gap: 4px;
    padding-left: 4px;
    color: #111;
}
.files td:last-child {
    padding-right: 7px;
    text-align: right;
}
.files td svg {
    width: 16px;
    height: 16px;
}
.files .selected td {
    background-color: #d9d9d9;
}
.files .hover td {
    background-color: #e5f3ff;
}
.statusbar {
    display: flex;
    height: 22px;
    padding-left: 14px;
    align-items: center;
    color: #33486b;
}
.statusbar span {
    padding-right: 10px;
    margin-right: 10px;
    border-right: 1px solid #f0f0f0;
}

/* optimize drives */
.dialog {
    left: 610px;
    top: 284px;
    width: 701px;
    height: 506px;
    border: 1px solid #1a7fc9;
    box-shadow: 0 4px 18px rgba(0, 0, 0, 0.4);
}
.dialog .titlebar {
    height: 30px;
    padding-left: 8px;
    gap: 5px;
}
.dialog .caption {
    color: #111;
}
.dialog .controls {
    margin-right: 1px;
    color: #000;
}
.dialog .controls button:disabled {
    color: #c4c4c4;
}
.dlg-body {
    flex: 1;
    padding: 13px 12px 0 12px;
}
.intro {
    line-height: 15px;
    padding-right: 30px;
}
.group {
    display: flex;
    align-items: center;
}
.group::after {
    content: "";
    flex: 1;
    height: 1px;
    background-color: #bfbfbf;
}
.status {
    margin: 23px -1px 12px 0;
}
.status span {
    width: 96px;
}
.sched {
    margin: 24px -1px 0 0;
}
.sched span {
    width: 149px;
}
.drives {
    height: 152px;
    margin-right: -1px;
    border: 1px solid #828790;
}
.drives table {
    width: 643px;
}
.d-drive {
    width: 135px;
}
.d-media {
    width: 147px;
}
.d-last {
    width: 120px;
}
.d-status {
    width: 241px;
}
.drives th {
    height: 25px;
    padding-left: 6px;
    border-right: 1px solid #e5e5e5;
}
.drives td {
    height: 19px;
    padding-left: 6px;
}
.drives td:first-child {
    padding-left: 5px;
}
.drive {
    display: flex;
    align-items: center;
}
.drive svg {
    width: 16px;
    height: 16px;
}
.drive span {
    flex: 1;
    padding-left: 2px;
    line-height: 19px;
}
.drives .selected td:not(:first-child), .drives .selected .drive span {
    background-color: #0078d7;
    color: #fff;
}
.actions {
    display: flex;
    justify-content: flex-end;
    gap: 14px;
    margin-top: 9px;
}
.btn {
    display: flex;
    align-items: center;
    justify-content: center;
    width: 122px;
    height: 25px;
    border: 1px solid #adadad;
    background-color: #e1e1e1;
}
.btn svg {
    width: 16px;
    height: 16px;
}
.btn:disabled {
    border-color: #bfbfbf;
    background-color: #ccc;
    color: #8a8a8a;
}
.btn:disabled svg {
    opacity: 0.6;
}
.schedule {
    display: flex;
    justify-content: space-between;
    align-items: flex-start;
    padding: 7px 0 0 21px;
    line-height: 22px;
}
.change {
    width: 148px;
}
.dlg-foot {
    display: flex;
    justify-content: flex-end;
    align-items: center;
    height: 46px;
    padding-right: 13px;
    border-top: 1px solid #dfdfdf;
    background-color: #f0f0f0;
}
.close {
    width: 86px;
}

/* taskbar */
.taskbar {
    position: relative;
    display: flex;
    height: 40px;
    background-color: #030509;
    color: #fff;
}
.start {
    width: 48px;
    display: flex;
    align-items: center;
    justify-content: center;
}
.start svg {
    width: 17px;
    height: 17px;
}
.cortana {
    width: 344px;
    padding: 0 14px 0 9px;
    display: flex;
    align-items: center;
    gap: 6px;
    background-color: #333;
}
.cortana svg {
    width: 21px;
    height: 21px;
}
.cortana .mic {
    width: 13px;
    height: 18px;
}
.cortana input {
    flex: 1;
    font-size: 14px;
    line-height: 20px;
    outline: none;
}
.cortana input::placeholder {
    color: #a3a3a3;
    opacity: 1;
}
.task {
    width: 48px;
    margin-right: 1px;
    display: flex;
    align-items: center;
    justify-content: center;
}
.task + .task {
    margin-left: 1px;
    margin-right: 0;
}
.task svg {
    width: 24px;
    height: 24px;
}
.open {
    border-bottom: 2px solid #76b9ed;
    padding-top: 2px;
}
.active {
    background-color: #32363a;
}
.tray {
    position: relative;
    display: flex;
    align-items: center;
    margin-left: auto;
}
.tray button {
    width: 25px;
    display: flex;
    justify-content: center;
}
.tray svg {
    width: 16px;
    height: 16px;
}
.clock {
    width: 60px;
    display: flex;
    flex-direction: column;
    text-align: center;
    line-height: 18px;
}
.tray .action {
    width: 44px;
}
.peek {
    width: 5px;
    height: 40px;
    margin-left: 6px;
    border-left: 1px solid #4a4c50;
}
.watermark {
    position: absolute;
    right: 23px;
    top: 0;
    height: 40px;
    display: flex;
    gap: 12px;
    color: #77797c;
    font-family: "Open Sans", sans-serif;
    font-weight: 300;
    font-size: 19px;
    line-height: 31px;
    pointer-events: none;
}
.watermark svg {
    width: 50px;
    height: 40px;
}
```
